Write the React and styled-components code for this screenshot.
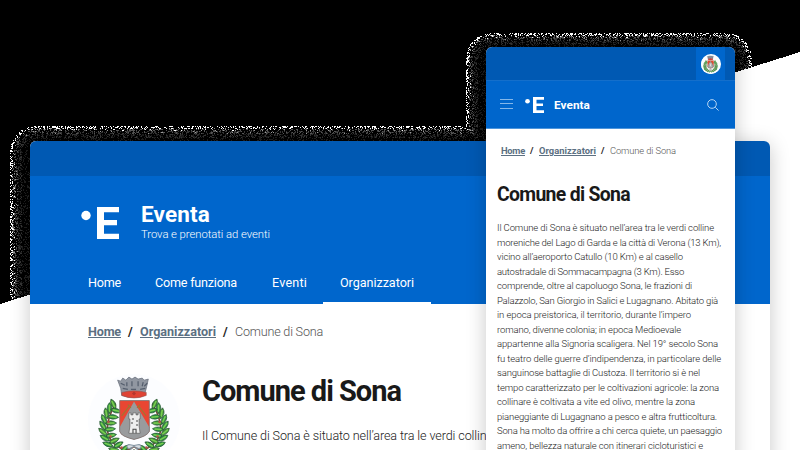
import React, { useLayoutEffect, useRef, useState } from "react";
import styled, { createGlobalStyle } from "styled-components";

const Global = createGlobalStyle`
  * { box-sizing: border-box; }
  body { margin: 0; overflow: hidden; font-family: Roboto, "Open Sans", sans-serif; }
`;

const Stage = styled.main`
  position: relative;
  width: 800px;
  height: 450px;
  overflow: hidden;
  background: #fff;
`;

const Backdrop = styled.svg`
  position: absolute;
  inset: 0;
`;

const DesktopWindow = styled.section`
  position: absolute;
  left: 30px;
  top: 141px;
  width: 740px;
  height: 340px;
  border-radius: 6px 6px 0 0;
  overflow: hidden;
  background: #fff;
`;

const WindowShadow = styled.div`
  position: absolute;
  left: ${(p) => p.$x}px;
  top: ${(p) => p.$y}px;
  width: ${(p) => p.$w}px;
  height: 440px;
  border-radius: 6px;
  box-shadow: 0 3px 20px rgba(0, 0, 0, 0.22);
`;

const PhoneWindow = styled(DesktopWindow)`
  left: 486px;
  top: 47px;
  width: 249px;
  height: 430px;
`;

const SlimBar = styled.div`
  display: flex;
  justify-content: flex-end;
  height: ${(p) => p.$h}px;
  padding-right: 10px;
  background: #0059b3;
`;

const Account = styled.div`
  display: flex;
  justify-content: center;
  width: 29px;
  padding-top: 7px;
  background: #06c;
`;

const Avatar = styled.div`
  display: grid;
  place-items: center;
  width: 20px;
  height: 20px;
  border-radius: 50%;
  background: #fff;
`;

const DesktopHeader = styled.header`
  display: flex;
  flex-direction: column;
  height: 128px;
  padding: 25px 0 0 51px;
  background: #06c;
  color: #fff;
`;

const Brand = styled.div`
  display: flex;
  height: 61px;
`;

const MarkSlot = styled.div`
  padding-top: 6px;
`;

const BrandText = styled.div`
  display: flex;
  flex-direction: column;
  align-items: flex-start;
  padding-left: 22px;
`;

const Nav = styled.nav`
  display: flex;
  height: 42px;
  margin-left: -1px;
`;

const NavItem = styled.a`
  width: ${(p) => p.$w}px;
  height: 42px;
  padding: 9px 0 0 ${(p) => p.$pad}px;
  border-bottom: 2px solid ${(p) => (p.$active ? "#fff" : "transparent")};
`;

const PhoneHeader = styled.header`
  display: flex;
  align-items: center;
  height: 49px;
  padding: 0 16px 0 14px;
  border-top: 1px solid #146fcb;
  border-bottom: 1px solid #4e96dc;
  background: #06c;
  color: #fff;
`;

const PhoneBrand = styled.div`
  display: flex;
  align-items: center;
  gap: 10px;
  flex: 1;
  padding-left: 12px;
`;

const Crumbs = styled.div`
  display: flex;
  align-items: flex-start;
  height: ${(p) => p.$h}px;
  padding: ${(p) => p.$pad};
  gap: ${(p) => p.$gap}px;
`;

const Body = styled.div`
  display: flex;
  padding-left: 58px;
`;

const Copy = styled.div`
  padding-left: 22px;
`;

const Article = styled.div`
  padding-left: 11px;
`;

const Line = styled.span`
  display: block;
  width: max-content;
  white-space: pre;
  font-size: ${(p) => p.$size}px;
  line-height: ${(p) => p.$lh}px;
  font-weight: ${(p) => p.$weight || 300};
  color: ${(p) => p.$color || "inherit"};
  text-decoration: ${(p) => (p.$link ? "underline" : "none")};
  text-underline-offset: 1px;
  text-decoration-thickness: 1px;
`;

/* A single line of text whose tracking is adjusted to fill a given width. */
function Fit({ w, size, lh, weight, color, link, children }) {
  const ref = useRef(null);
  const [spacing, setSpacing] = useState(0);
  useLayoutEffect(() => {
    const measure = () => {
      const el = ref.current;
      if (!el) return;
      const previous = el.style.letterSpacing;
      el.style.letterSpacing = "0px";
      const natural = el.getBoundingClientRect().width;
      el.style.letterSpacing = previous;
      setSpacing((w - natural) / children.length);
    };
    measure();
    document.fonts?.ready.then(measure);
  }, [w, children]);
  return (
    <Line ref={ref} $size={size} $lh={lh} $weight={weight} $color={color} $link={link} style={{ letterSpacing: `${spacing}px` }}>
      {children}
    </Line>
  );
}

/* Speckled halo around both windows, drawn on the dark part of the backdrop. */
const shades = ["#fff", "#999", "#555", "#343434", "#1c1c1c"];

function speckles() {
  let seed = 7;
  const rnd = () => {
    seed = (seed * 1664525 + 1013904223) >>> 0;
    return seed / 4294967296;
  };
  const inset = (x, y, l, t, r, rad) => {
    const dx = Math.min(x - l, r - x);
    const dy = y - t;
    if (dx < rad && dy < rad) return rad - Math.hypot(rad - dx, rad - dy);
    return Math.min(dx, dy);
  };
  const out = shades.map(() => "");
  for (let y = 31; y < 305; y++) {
    for (let x = 8; x < 754; x++) {
      if (y > 303 - x * 0.315) continue;
      const d = Math.max(inset(x, y, 10, 126, 790, 24), inset(x, y, 466, 33, 751, 24));
      if (d < 0 || d > 24) continue;
      const r = rnd();
      let k = -1;
      if (d < 2) k = r < 0.4 ? 0 : -1;
      else if (d < 3) k = r < 0.22 ? 0 : r < 0.34 ? 1 : -1;
      else if (d < 5) k = r < 0.04 ? 0 : r < 0.12 ? 1 : r < 0.36 ? 2 : -1;
      else if (d < 8) k = r < 0.02 ? 1 : r < 0.14 ? 2 : r < 0.42 ? 3 : -1;
      else if (d < 12) k = r < 0.18 ? 3 : r < 0.48 ? 4 : -1;
      else k = r < 0.22 ? 4 : -1;
      if (k >= 0) out[k] += `M${x} ${y}h1v1h-1z`;
    }
  }
  return out;
}

const halo = speckles();

function Mark({ w, h }) {
  return (
    <svg width={w} height={h} viewBox="0 0 38 32" fill="#fff">
      <circle cx="5" cy="8.5" r="4.7" />
      <path d="M16 0H38V5.3H23V12.9H36V18.2H23V26.7H38V32H16Z" />
    </svg>
  );
}

const leaves = [
  [19, 30, 40], [15, 34, 65], [22, 36, -10], [12, 39, 55], [19, 42, -20], [10, 45, 40],
  [17, 48, -25], [9, 51, 30], [16, 54, -30], [9, 57, 15], [17, 60, -35], [11, 63, 5],
  [20, 65, -50], [14, 69, -5], [24, 69, -55], [20, 74, -15], [30, 73, -70], [27, 78, -30], [36, 78, -75],
];

function Branch() {
  return (
    <g transform="translate(6 0)">
      <path d="M21 29Q3 60 25 72Q32 77 40 70" fill="none" stroke="#76513e" strokeWidth="1.7" />
      {leaves.map(([x, y, a], i) => (
        <g key={i} transform={`translate(${x} ${y}) rotate(${a - 65})`}>
          <path d="M0 5Q-4.5-1 0-6Q4.5-1 0 5Z" fill={i % 3 ? "#2f8e43" : "#438d3b"} stroke="#23502f" strokeWidth=".6" />
          <path d="M0-4V3" stroke="#79cf50" strokeWidth="1.5" />
        </g>
      ))}
      <circle cx="14" cy="47" r="1.2" fill="#b65448" />
      <circle cx="16" cy="61" r="1.2" fill="#b65448" />
      <circle cx="27" cy="72" r="1.2" fill="#b65448" />
    </g>
  );
}

function Crest({ size }) {
  return (
    <svg width={size} height={size} viewBox="0 0 90 90">
      <circle cx="45" cy="45" r="45" fill="#fcfdff" />
      <Branch />
      <g transform="translate(90 0) scale(-1 1)"><Branch /></g>
      <path d="M29 6l3 1 2-3 3 2 3-3 3 2 3-2 3 2 4-1 2 2 4-1-2 9-2 7Q45 25 33 21l-1-7z" fill="#9197a1" stroke="#656c78" strokeWidth=".7" />
      <path d="M32 9l4 2M38 8v4M43 7v5M49 7v5M54 8l-1 4M58 9l-3 3M34 14l5 1M42 15h5M51 15l5-1" stroke="#555e6d" strokeWidth="1.2" />
      <path d="M33 18Q45 15 57 18V21Q45 26 33 21Z" fill="#df4334" stroke="#8c524e" strokeWidth=".5" />
      <path d="M43 19l2-2 2 2-2 2z" fill="#b4362d" />
      <path d="M31 26H60V56Q58 61 45 64Q32 61 31 56Z" fill="#e94632" />
      <path d="M45 27L60 52V56Q58 61 45 64Q32 61 31 56V52Z" fill="#999b9d" />
      <path d="M31 26H60V56Q58 61 45 64Q32 61 31 56Z" fill="none" stroke="#777" strokeWidth=".8" />
      <path d="M33 41l7-9M57 41l-7-9M39 30l3 3M51 30l-3 3" stroke="#a07532" strokeWidth="1.2" />
      <path d="M40 38h2v2h2v-2h3v2h2v-2h2v6h-1v7l1 7H40l1-7v-7h-1z" fill="#eee" stroke="#555" strokeWidth=".6" />
      <path d="M43 44h2M47 46h2M42 48h2M47 50h2M44 58v-4h3v4" stroke="#444" strokeWidth="1" fill="none" />
      <path d="M40 69q-4 2 0 4l5-2 5 2q4-2 0-4l-5 1zM43 72l-4 6M47 72l4 6" fill="#d8dde2" stroke="#8193a1" />
    </svg>
  );
}

const Spacer = styled.div`
  height: ${(p) => p.$h}px;
`;

const story = [
  [217, "Il Comune di Sona è situato nell’area tra le verdi colline"],
  [224, "moreniche del Lago di Garda e la città di Verona (13 Km),"],
  [186, "vicino all’aeroporto Catullo (10 Km) e al casello"],
  [187, "autostradale di Sommacampagna (3 Km). Esso"],
  [195, "comprende, oltre al capoluogo Sona, le frazioni di"],
  [221, "Palazzolo, San Giorgio in Salici e Lugagnano. Abitato già"],
  [194, "in epoca preistorica, il territorio, durante l’impero"],
  [184, "romano, divenne colonia; in epoca Medioevale"],
  [221, "appartenne alla Signoria scaligera. Nel 19° secolo Sona"],
  [224, "fu teatro delle guerre d’indipendenza, in particolare delle"],
  [203, "sanguinose battaglie di Custoza. Il territorio si è nel"],
  [222, "tempo caratterizzato per le coltivazioni agricole: la zona"],
  [198, "collinare è coltivata a vite ed olivo, mentre la zona"],
  [220, "pianeggiante di Lugagnano a pesco e altra frutticoltura."],
  [225, "Sona ha molto da offrire a chi cerca quiete, un paesaggio"],
  [206, "ameno, bellezza naturale con itinerari cicloturistici e"],
];

export default function App() {
  return (
    <Stage>
      <Global />
      <WindowShadow $x={30} $y={141} $w={740} />
      <Backdrop width="800" height="450">
        <path d="M0 0H800V52L0 304Z" fill="#000" shapeRendering="crispEdges" />
        {halo.map((d, i) => <path key={i} d={d} fill={shades[i]} shapeRendering="crispEdges" />)}
      </Backdrop>
      <DesktopWindow>
        <SlimBar $h={35} />
        <DesktopHeader>
          <Brand>
            <MarkSlot><Mark w={38} h={32} /></MarkSlot>
            <BrandText>
              <Fit w={69} size={22.5} lh={26} weight={700}>Eventa</Fit>
              <Fit w={129} size={11.3} lh={15}>Trova e prenotati ad eventi</Fit>
            </BrandText>
          </Brand>
          <Nav>
            <NavItem $w={67} $pad={8}><Fit w={33} size={12.6} lh={23} weight={400}>Home</Fit></NavItem>
            <NavItem $w={116} $pad={8}><Fit w={82} size={12.6} lh={23} weight={400}>Come funziona</Fit></NavItem>
            <NavItem $w={60} $pad={9}><Fit w={35} size={12.6} lh={23} weight={400}>Eventi</Fit></NavItem>
            <NavItem $w={108} $pad={17} $active><Fit w={74} size={12.6} lh={23} weight={400}>Organizzatori</Fit></NavItem>
          </Nav>
        </DesktopHeader>
        <Crumbs $h={70} $pad="18px 0 0 58px" $gap={7}>
          <Fit w={33} size={12.6} lh={20} weight={700} color="#5b6f82" link>Home</Fit>
          <Fit w={5} size={12.6} lh={20} weight={700} color="#222">/</Fit>
          <Fit w={76} size={12.6} lh={20} weight={700} color="#5b6f82" link>Organizzatori</Fit>
          <Fit w={5} size={12.6} lh={20} weight={700} color="#222">/</Fit>
          <Fit w={88} size={12.6} lh={20} color="#555">Comune di Sona</Fit>
        </Crumbs>
        <Body>
          <Crest size={92} />
          <Copy>
            <Fit w={199} size={29} lh={34} weight={700} color="#191919">Comune di Sona</Fit>
            <Spacer $h={18} />
            <Fit w={291} size={12.6} lh={20} color="#222">Il Comune di Sona è situato nell’area tra le verdi colline</Fit>
          </Copy>
        </Body>
      </DesktopWindow>
      <WindowShadow $x={486} $y={47} $w={249} />
      <PhoneWindow>
        <SlimBar $h={33}><Account><Avatar><Crest size={19} /></Avatar></Account></SlimBar>
        <PhoneHeader>
          <svg width="13" height="12" viewBox="0 0 13 12"><path d="M0 .5H13M0 4.5H13M0 9.5H13" stroke="#84b7e9" /></svg>
          <PhoneBrand><Mark w={19} h={16} /><Fit w={36} size={11.8} lh={18} weight={700}>Eventa</Fit></PhoneBrand>
          <svg width="12" height="12" viewBox="0 0 13 13" fill="none" stroke="#c7def5"><circle cx="5.4" cy="5.4" r="4.7" /><path d="M9 9l3.5 3.5" /></svg>
        </PhoneHeader>
        <Crumbs $h={54} $pad="14px 0 0 15px" $gap={5}>
          <Fit w={24} size={9.4} lh={16} weight={700} color="#5b6f82" link>Home</Fit>
          <Fit w={4} size={9.4} lh={16} weight={700} color="#222">/</Fit>
          <Fit w={57} size={9.4} lh={16} weight={700} color="#5b6f82" link>Organizzatori</Fit>
          <Fit w={4} size={9.4} lh={16} weight={700} color="#222">/</Fit>
          <Fit w={66} size={9.4} lh={16} color="#555">Comune di Sona</Fit>
        </Crumbs>
        <Article>
          <Fit w={133} size={19.4} lh={24} weight={700} color="#191919">Comune di Sona</Fit>
          <Spacer $h={14} />
          {story.map(([w, text]) => <Fit key={text} w={w} size={9.5} lh={14.5} color="#222">{text}</Fit>)}
        </Article>
      </PhoneWindow>
    </Stage>
  );
}
